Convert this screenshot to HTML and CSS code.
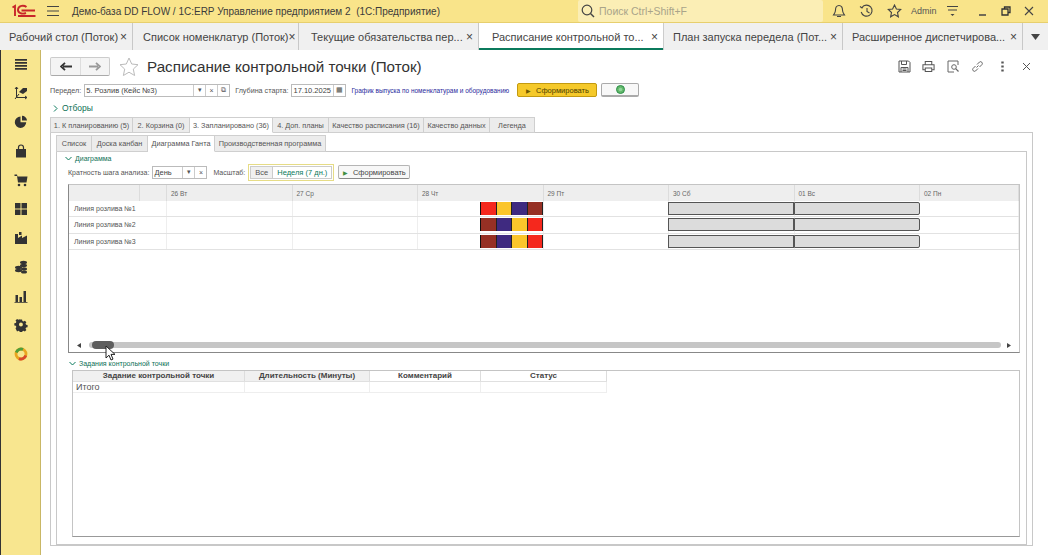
FILE: index.html
```html
<!DOCTYPE html>
<html lang="ru">
<head>
<meta charset="utf-8">
<title>Расписание контрольной точки (Поток)</title>
<link rel="stylesheet" href="styles.css">
</head>
<body>
<header class="topbar">
  <svg class="logo" width="24" height="14" viewBox="0 0 24 14"><path d="M.5 3.500L3 2v10" fill="none" stroke="#c8262a" stroke-width="1.900"/><path d="M14.500 3C12 1 6.500 1.200 6 5.500c-.4 3.500 4 5 8 3.500" fill="none" stroke="#c8262a" stroke-width="1.900"/><path d="M9.500 6.500H23M6 12h17.500" fill="none" stroke="#c8262a" stroke-width="1.900"/></svg>
  <svg class="burger" width="14" height="12" viewBox="0 0 14 12"><path d="M1 1.500h12M1 6h12M1 10.500h12" stroke="#444" stroke-width="1.100"/></svg>
  <div class="apptitle">Демо-база DD FLOW / 1C:ERP Управление предприятием 2&nbsp; (1С:Предприятие)</div>
  <div class="search">
    <svg width="14" height="14" viewBox="0 0 14 14"><circle cx="6" cy="6" r="4.800" fill="none" stroke="#444" stroke-width="1.200"/><path d="M9.500 9.500l3.500 3.500" stroke="#444" stroke-width="1.400"/></svg>
    <span>Поиск Ctrl+Shift+F</span>
  </div>
  <div class="topicons">
    <svg width="14" height="14" viewBox="0 0 14 14"><path d="M7 1.500c-2.500 0-3.500 2-3.500 4.500 0 2.500-1 3.500-2 5h11c-1-1.500-2-2.500-2-5 0-2.500-1-4.500-3.500-4.500zM5 12.500h4" fill="none" stroke="#444" stroke-width="1.100"/></svg>
    <svg width="15" height="14" viewBox="0 0 15 14"><path d="M3 3.500a5.500 5.500 0 1 1-.8 4.500M1 2.500l2 1.500 1.500-2M8 4v3.500l2.500 1.500" fill="none" stroke="#444" stroke-width="1.100"/></svg>
    <svg width="15" height="14" viewBox="0 0 15 14"><path d="M7.500 1l1.900 4 4.300.5-3.200 3 .9 4.300-3.900-2.200-3.900 2.200.9-4.300-3.200-3L5.600 5z" fill="none" stroke="#444" stroke-width="1.100"/></svg>
    <span class="admin">Admin</span>
    <svg width="13" height="12" viewBox="0 0 13 12"><path d="M1 1.500h11M2 5h9" stroke="#444" stroke-width="1.100"/><path d="M4.500 9h4L6.500 11z" fill="#444"/></svg>
    <svg class="ctl-min" width="10" height="12" viewBox="0 0 10 12"><path d="M1 10h7" stroke="#444" stroke-width="1.500"/></svg>
    <svg width="10" height="10" viewBox="0 0 10 10"><path d="M3.500 3V1h5.500v5.500H7M1 3h6v6H1z" fill="none" stroke="#333" stroke-width="1.300"/></svg>
    <svg width="10" height="10" viewBox="0 0 10 10"><path d="M1 1l8 8M9 1l-8 8" stroke="#444" stroke-width="1.100"/></svg>
  </div>
</header>

<nav class="opentabs">
  <div class="otab w1">Рабочий стол (Поток)<i>×</i></div>
  <div class="otab w2">Список номенклатур (Поток)<i>×</i></div>
  <div class="otab w3">Текущие обязательства пер...<i>×</i></div>
  <div class="otab w4 active">Расписание контрольной то...<i>×</i></div>
  <div class="otab w5">План запуска передела (Пот...<i>×</i></div>
  <div class="otab w6">Расширенное диспетчирова...<i>×</i></div>
  <div class="otab-more"><svg width="9" height="6" viewBox="0 0 9 6"><path d="M0 0h9L4.500 6z" fill="#444"/></svg></div>
</nav>

<div class="workspace">
  <aside class="sidebar">
    <svg viewBox="0 0 14 14"><path d="M1 2h12v1.700H1zM1 5h12v1.700H1zM1 8h12v1.700H1zM1 11h12v1.700H1z"/></svg>
    <svg viewBox="0 0 14 14"><path d="M2.500 1v10.500H13M1 3l1.500-2L4 3M11 10l2 1.500-2 1.500" fill="none" stroke="#333" stroke-width="1"/><path d="M5 6l4-4h4v3l-4 3z"/><path d="M1 13l4-5" stroke="#333"/></svg>
    <svg viewBox="0 0 14 14"><path d="M6.500 1.500a5.700 5.700 0 1 0 5.700 5.700H6.500z"/><path d="M8 0.800v4.800h5a5 5 0 0 0-5-4.800z"/></svg>
    <svg viewBox="0 0 14 14"><path d="M2 5h10v8.500H2z"/><path d="M4.500 6V3.500a2.500 2.500 0 0 1 5 0V6" fill="none" stroke="#333" stroke-width="1.200"/></svg>
    <svg viewBox="0 0 14 14"><path d="M.5 1.500h2.500l.5 2h10l-1 6H4l-1-6.500H.5z"/><circle cx="5" cy="12" r="1.300"/><circle cx="11" cy="12" r="1.300"/></svg>
    <svg viewBox="0 0 14 14"><path d="M1 1h5.500v5.500H1zM7.500 1H13v5.500H7.500zM1 7.500h5.500V13H1zM7.500 7.500H13V13H7.500z"/></svg>
    <svg viewBox="0 0 14 14"><path d="M1 13V3h3v4l4-2.500V7l5-2.500V13z"/><path d="M5 1h2.500v3H5z"/></svg>
    <svg viewBox="0 0 14 14"><ellipse cx="9.500" cy="2.500" rx="3.500" ry="1.700"/><ellipse cx="9.500" cy="5.500" rx="3.500" ry="1.700"/><ellipse cx="4.500" cy="7.500" rx="3.500" ry="1.700"/><ellipse cx="4.500" cy="10.500" rx="3.500" ry="1.700"/><ellipse cx="10" cy="9" rx="3" ry="1.700"/><ellipse cx="10" cy="12" rx="3" ry="1.500"/></svg>
    <svg viewBox="0 0 14 14"><path d="M1.500 6h2.500v7H1.500zM5.500 8H8v5H5.500zM9.500 2H12v11H9.500zM.5 13h13v.8H.5z"/></svg>
    <svg viewBox="0 0 14 14"><path fill-rule="evenodd" d="M5.700.8h2.600l.4 1.800 1.300.6 1.600-1 1.800 1.800-1 1.600.6 1.300 1.800.4v2.600l-1.800.4-.6 1.300 1 1.600-1.800 1.800-1.600-1-1.300.6-.4 1.800H5.700l-.4-1.800-1.300-.6-1.600 1L.6 11.200l1-1.600L1 8.300l-1.800-.4V5.300L1 4.900l.6-1.300-1-1.600 1.800-1.800 1.600 1 1.300-.6zM7 4.400a2.300 2.300 0 1 0 0 4.600 2.300 2.300 0 0 0 0-4.600z" transform="translate(1 .8) scale(.85)"/></svg>
    <svg viewBox="0 0 14 14"><circle cx="7" cy="7" r="5" fill="none" stroke="#eaa51f" stroke-width="2.800"/><path d="M2.300 5.500A5 5 0 0 1 9 2.400" fill="none" stroke="#4f9f3a" stroke-width="2.800"/><path d="M11.800 8.500A5 5 0 0 1 5 11.600" fill="none" stroke="#d8472b" stroke-width="2.800"/></svg>
  </aside>

  <main class="page">
    <div class="titlerow">
      <div class="navbtns">
        <div class="navbtn"><svg width="12" height="9" viewBox="0 0 12 9"><path d="M12 4.500H3M5 .8L1 4.500 5 8.200" fill="none" stroke="#333" stroke-width="1.800"/></svg></div>
        <div class="navbtn"><svg width="12" height="9" viewBox="0 0 12 9"><path d="M0 4.500h9M7 .8l4 3.700L7 8.200" fill="none" stroke="#999" stroke-width="1.800"/></svg></div>
      </div>
      <svg class="bigstar" width="20" height="20" viewBox="0 0 20 20"><path d="M10 1l2.700 6 6.300.7-4.700 4.400 1.300 6.400-5.600-3.300-5.600 3.300 1.300-6.400L1 7.700 7.300 7z" fill="none" stroke="#bbb" stroke-width="1"/></svg>
      <h1>Расписание контрольной точки (Поток)</h1>
      <div class="pageicons">
        <svg width="13" height="13" viewBox="0 0 13 13"><path d="M1 1h9.500L12 2.500V12H1zM3.500 1v3.500h5V1M3 12V7.500h7V12M4.500 9h4M4.500 10.500h4" fill="none" stroke="#555" stroke-width="1"/></svg>
        <svg width="13" height="13" viewBox="0 0 14 13"><path d="M3.500 4V1h7v3M3.500 10H1V4.500h12V10h-2.500M3.500 8h7v4h-7z" fill="none" stroke="#555" stroke-width="1.100"/></svg>
        <svg width="13" height="13" viewBox="0 0 13 13"><path d="M11 5V1H1v11h6" fill="none" stroke="#666"/><circle cx="7" cy="7" r="2.300" fill="none" stroke="#666"/><path d="M8.700 8.700l2.800 2.800" stroke="#666" stroke-width="1.200"/></svg>
        <svg width="13" height="13" viewBox="0 0 13 13"><path d="M5.500 7.500l2-2M4.500 6l-2.500 2.500a1.800 1.800 0 0 0 2.500 2.500L7 8.500M6 4.500l2.500-2.500a1.800 1.800 0 0 1 2.500 2.500L8.500 7" fill="none" stroke="#666"/></svg>
        <svg width="13" height="13" viewBox="0 0 13 13"><path d="M5.300 1.500h2.400v2H5.300zM5.300 5.500h2.400v2H5.300zM5.300 9.500h2.400v2H5.300z" fill="#555"/></svg>
        <svg width="13" height="13" viewBox="0 0 13 13"><path d="M3 3l7 7M10 3l-7 7" stroke="#555"/></svg>
      </div>
    </div>

    <div class="fieldrow">
      <label class="lab">Передел:</label>
      <div class="input i-peredel"><span class="val">5. Розлив (Кейс №3)</span><b>▾</b><b>×</b><b>⧉</b></div>
      <label class="lab l2">Глубина старта:</label>
      <div class="input i-date"><span class="val">17.10.2025</span><b>▦</b></div>
      <a class="link">График выпуска по номенклатурам и оборудованию</a>
      <div class="btn btn-yellow"><em>▶</em>Сформировать</div>
      <div class="btn btn-green"><svg width="9" height="9" viewBox="0 0 9 9"><circle cx="4.500" cy="4.500" r="4" fill="#62b86a" stroke="#2f8f4a"/><circle cx="4.500" cy="4.500" r="1.800" fill="#8fd69a"/></svg></div>
    </div>

    <div class="filters"><svg width="5" height="7" viewBox="0 0 5 7"><path d="M1 .5l3 3-3 3" fill="none" stroke="#0b7a5c"/></svg>Отборы</div>

    <div class="tabs t1">
      <div class="tab a1">1. К планированию (5)</div>
      <div class="tab a2">2. Корзина (0)</div>
      <div class="tab a3 on">3. Запланировано (36)</div>
      <div class="tab a4">4. Доп. планы</div>
      <div class="tab a5">Качество расписания (16)</div>
      <div class="tab a6">Качество данных</div>
      <div class="tab a7">Легенда</div>
    </div>
    <section class="panel">
      <div class="tabs t2">
        <div class="tab b1">Список</div>
        <div class="tab b2">Доска канбан</div>
        <div class="tab b3 on">Диаграмма Ганта</div>
        <div class="tab b4">Производственная программа</div>
      </div>
      <section class="subpanel">
        <div class="grouphead g1"><svg width="7" height="5" viewBox="0 0 7 5"><path d="M.5 1l3 3 3-3" fill="none" stroke="#0b7a5c"/></svg>Диаграмма</div>
        <div class="ganttctl">
          <label class="lab l-step">Кратность шага анализа:</label>
          <div class="input i-step"><span class="val">День</span><b>▾</b><b>×</b></div>
          <label class="lab l3">Масштаб:</label>
          <div class="scale"><span class="s-all">Все</span><span class="s-week">Неделя (7 дн.)</span></div>
          <div class="btn btn-form"><em>▶</em>Сформировать</div>
        </div>

        <div class="gantt">
          <div class="g-head">
            <div class="c0"></div><div class="c1"></div>
            <div class="d">26 Вт</div><div class="d">27 Ср</div><div class="d d3">28 Чт</div><div class="d">29 Пт</div><div class="d">30 Сб</div><div class="d">01 Вс</div><div class="d dl">02 Пн</div>
          </div>
          <div class="g-row">
            <div class="g-name">Линия розлива №1</div><div class="cell"></div><div class="cell"></div><div class="cell"></div><div class="cell"></div><div class="cell"></div><div class="cell"></div>
            <div class="bars"><i class="red"></i><i class="yel"></i><i class="blu"></i><i class="bro"></i></div>
            <div class="gray g-a"></div><div class="gray g-b"></div>
          </div>
          <div class="g-row">
            <div class="g-name">Линия розлива №2</div><div class="cell"></div><div class="cell"></div><div class="cell"></div><div class="cell"></div><div class="cell"></div><div class="cell"></div>
            <div class="bars"><i class="bro"></i><i class="blu"></i><i class="yel"></i><i class="red"></i></div>
            <div class="gray g-a"></div><div class="gray g-b"></div>
          </div>
          <div class="g-row">
            <div class="g-name">Линия розлива №3</div><div class="cell"></div><div class="cell"></div><div class="cell"></div><div class="cell"></div><div class="cell"></div><div class="cell"></div>
            <div class="bars"><i class="bro"></i><i class="blu"></i><i class="yel"></i><i class="red"></i></div>
            <div class="gray g-a"></div><div class="gray g-b"></div>
          </div>
          <div class="g-space"></div>
          <div class="g-scroll">
            <svg width="4" height="5" viewBox="0 0 4 5"><path d="M4 0v5L0 2.500z" fill="#444"/></svg>
            <div class="track"><div class="thumb"></div></div>
            <svg width="4" height="5" viewBox="0 0 4 5"><path d="M0 0v5l4-2.500z" fill="#444"/></svg>
          </div>
        </div>

        <div class="grouphead g2"><svg width="7" height="5" viewBox="0 0 7 5"><path d="M.5 1l3 3 3-3" fill="none" stroke="#0b7a5c"/></svg>Задания контрольной точки</div>
        <div class="tasks">
          <div class="t-head"><span class="k1">Задание контрольной точки</span><span class="k2">Длительность (Минуты)</span><span class="k3">Комментарий</span><span class="k4">Статус</span></div>
          <div class="t-row"><span class="k1 tot">Итого</span><span class="k2"></span><span class="k3"></span><span class="k4"></span></div>
        </div>
      </section>
    </section>
  </main>
</div>
<svg class="cursor" width="13" height="17" viewBox="0 0 13 17"><path d="M1 1v12l3-2.800 2 4.800 2-.9-2-4.700h4z" fill="#fff" stroke="#222"/></svg>
</body>
</html>
```

FILE: styles.css
```css
* { box-sizing: border-box; }
html, body { margin: 0; height: 100%; }
body {
  width: 1048px; height: 555px; overflow: hidden; background: #fff;
  font-family: "Liberation Sans", Arial, sans-serif; color: #444;
  display: flex; flex-direction: column; position: relative;
}
.topbar { height: 23px; flex: none; background: #f9e48a; display: flex; align-items: center; border-bottom: 1px solid #e7cf6e; }
.logo { margin-left: 12px; flex: none; }
.burger { margin-left: 10px; flex: none; }
.apptitle { margin-left: 12px; font-size: 10px; color: #3b3b3b; width: 506px; white-space: nowrap; flex: none; }
.search { width: 245px; height: 22px; background: #fbeeb5; border-radius: 2px; display: flex; align-items: center; gap: 4px; padding-left: 3px; font-size: 10.500px; color: #a9a48a; flex: none; }
.topicons { display: flex; align-items: center; margin-left: 9px; gap: 13px; }
.topicons .admin { font-size: 9px; color: #555; margin-left: -4px; margin-right: -4px; }
.ctl-min { margin-left: 6px; }
.opentabs { height: 27px; flex: none; display: flex; background: #f0f0f0; }
.otab { height: 27px; border-right: 1px solid #c8c8c8; font-size: 11px; color: #444; display: flex; align-items: center; justify-content: space-between; padding: 0 5px 0 9px; white-space: nowrap; flex: none; }
.otab i { font-style: normal; font-size: 12px; color: #444; }
.w1 { width: 133px; } .w2 { width: 166px; padding-left: 10px; } .w3 { width: 180px; padding-left: 12px; } .w4 { width: 185px; } .w5 { width: 179px; } .w6 { width: 180px; }
.otab.active { background: #fff; box-shadow: inset 0 -2px 0 #0b7a5c; padding-left: 13px; border-right-color: #ccc; }
.otab-more { flex: 1; display: flex; align-items: center; justify-content: center; }
.workspace { flex: 1; display: flex; min-height: 0; }
.sidebar { width: 41px; flex: none; background: #f8e68f; border-left: 1px solid #333; border-right: 1px solid #c9b765; display: flex; flex-direction: column; align-items: center; padding-top: 7px; gap: 15px; }
.sidebar svg { width: 14px; height: 14px; fill: #333; flex: none; }
.page { flex: 1; padding: 6px 15px 0 9px; display: flex; flex-direction: column; min-width: 0; }
.titlerow { height: 21px; display: flex; align-items: center; flex: none; }
.navbtns { display: flex; height: 19px; border: 1px solid #ccc; border-bottom-color: #aaa; border-radius: 2px; background: #f4f4f4; }
.navbtn { width: 29px; display: flex; align-items: center; justify-content: center; }
.navbtn + .navbtn { border-left: 1px solid #ddd; width: 29px; }
.bigstar { margin-left: 9px; flex: none; }
h1 { margin: 0 0 0 8px; font-size: 15.200px; font-weight: 400; color: #333; white-space: nowrap; }
.pageicons { margin-left: auto; display: flex; align-items: center; gap: 11.500px; }
.fieldrow { height: 14px; margin-top: 6px; display: flex; align-items: center; flex: none; }
.lab { font-size: 7.200px; color: #555; white-space: nowrap; }
.input { height: 13px; border: 1px solid #bbb; display: flex; align-items: center; font-size: 7.500px; background: #fff; flex: none; }
.input .val { flex: 1; padding-left: 1px; white-space: nowrap; overflow: hidden; }
.input b { width: 12px; height: 100%; border-left: 1px solid #ccc; font-size: 7px; font-weight: 400; display: flex; align-items: center; justify-content: center; color: #555; }
.i-peredel { width: 146px; margin-left: 3px; }
.l2 { margin-left: 5px; }
.i-date { width: 55px; margin-left: 3px; }
.link { margin-left: 5px; font-size: 6.500px; color: #2a2a9c; white-space: nowrap; width: 166px; flex: none; }
.btn { display: flex; align-items: center; justify-content: center; border-radius: 2px; font-size: 7.500px; flex: none; }
.btn em { font-style: normal; font-size: 6px; color: #3f8f3f; margin-right: 5px; }
.btn-yellow { width: 80px; height: 14px; background: #f5c92a; border: 1px solid #c39a10; color: #4a3c00; }
.btn-yellow em { color: #6d5a00; }
.btn-green { width: 38px; height: 14px; margin-left: 4px; background: #f8f8f8; border: 1px solid #aaa; border-bottom-width: 2px; }
.filters { height: 14px; margin-top: 4px; margin-left: 3px; display: flex; align-items: center; gap: 4px; font-size: 8.500px; color: #0b6f55; flex: none; }
.tabs { display: flex; flex: none; position: relative; z-index: 1; }
.t1 { margin-top: 2px; height: 16px; }
.tab { height: 100%; background: #ececec; border: 1px solid #cfcfcf; border-left: 0; font-size: 7.300px; color: #555; display: flex; align-items: center; justify-content: center; white-space: nowrap; }
.tab:first-child { border-left: 1px solid #cfcfcf; }
.tab.on { background: #fff; border-bottom-color: #fff; }
.a1 { width: 83px; } .a2 { width: 57px; } .a3 { width: 83px; } .a4 { width: 56px; } .a5 { width: 95px; } .a6 { width: 66px; } .a7 { width: 45px; }
.panel { flex: 1; margin-top: -1px; border: 1px solid #c8c8c8; margin-bottom: 9px; padding: 2px 5px 0 5px; display: flex; flex-direction: column; min-height: 0; }
.t2 { height: 17px; }
.b1 { width: 36px; } .b2 { width: 56px; } .b3 { width: 67px; } .b4 { width: 111px; }
.subpanel { flex: 1; margin-top: -1px; border: 1px solid #c8c8c8; padding: 0 6px 7px 6px; display: flex; flex-direction: column; min-height: 0; }
.grouphead { display: flex; align-items: center; gap: 3px; font-size: 7px; color: #0b6f55; flex: none; height: 12px; }
.g1 { margin-left: 2px; }
.g2 { margin-top: 4px; margin-bottom: 1px; margin-left: 6px; }
.ganttctl { height: 14px; display: flex; align-items: center; margin-top: 1px; margin-left: 5px; flex: none; }
.l-step { font-size: 7px; }
.i-step { width: 55px; margin-left: 3px; }
.l3 { margin-left: 6px; font-size: 7px; }
.scale { display: flex; height: 17px; border: 1px solid #e6dc86; margin-left: 3px; font-size: 7.500px; flex: none; padding: 1px; }
.scale span { display: flex; align-items: center; justify-content: center; }
.s-all { width: 23px; background: #f0f0f0; border: 1px solid #ccc; color: #555; }
.s-week { width: 59px; border: 1px solid #ccc; border-left: 0; color: #0b7a5c; }
.btn-form { width: 72px; height: 14px; margin-left: 4px; background: #f7f7f7; border: 1px solid #b5b5b5; border-bottom-color: #888; color: #444; }
.gantt { height: 169px; margin-top: 5px; margin-left: 5px; border: 1px solid #c4c4c4; border-bottom-color: #888; border-left-color: #888; display: flex; flex-direction: column; flex: none; }
.g-head { height: 16px; display: grid; grid-template-columns: 71px 27px repeat(6, 125.500px) 1fr; background: #eee; flex: none; }
.g-head > div { border-right: 1px solid #dcdcdc; font-size: 6.500px; color: #666; display: flex; align-items: center; padding-left: 4px; }
.g-row { height: 16.300px; display: grid; grid-template-columns: 98px repeat(5, 125.500px) 1fr; border-bottom: 1px solid #e2e2e2; position: relative; flex: none; }
.g-name { font-size: 7px; color: #555; display: flex; align-items: center; padding-left: 5px; border-right: 1px solid #eee; }
.cell { border-right: 1px solid #eee; }
.bars { position: absolute; left: 411px; top: 1px; width: 63px; height: 13px; display: flex; background: #111; padding-left: 1px; gap: 0; }
.bars i { flex: 1; border-right: 1px solid #222; }
.red { background: #f5281d; } .yel { background: #fbc52b; } .blu { background: #3f2a80; } .bro { background: #963024; }
.gray { position: absolute; top: 1px; height: 13px; width: 126px; background: #dcdcdc; border: 1px solid #555; }
.g-a { left: 599px; }
.g-b { left: 725px; border-radius: 0 2px 2px 0; }
.g-space { flex: 1; }
.g-scroll { height: 14px; display: flex; align-items: center; padding: 0 8px; gap: 8px; flex: none; }
.track { flex: 1; height: 6px; background: #c6c6c6; border-radius: 3px; position: relative; margin-right: -2px; }
.thumb { position: absolute; left: 3px; top: -1px; width: 22px; height: 8px; background: #5e5e5e; border-radius: 4px; }
.tasks { flex: 1; margin-left: 9px; border: 1px solid #c4c4c4; border-bottom-color: #999; min-height: 0; }
.t-head, .t-row { display: grid; grid-template-columns: 172px 125px 111px 126px; width: 534px; height: 11px; }
.t-head span { font-size: 8px; font-weight: 700; color: #444; text-align: center; line-height: 10px; background: #f0f0f0; border-right: 1px solid #ddd; }
.t-head .k3, .t-head .k4 { background: none; }
.t-head { border-bottom: 1px solid #e0e0e0; }
.t-row span { border-right: 1px solid #eee; border-bottom: 1px solid #eee; }
.tot { font-size: 9px; color: #555; padding-left: 3px; line-height: 10px; }
.cursor { position: absolute; left: 105px; top: 345px; }
```
